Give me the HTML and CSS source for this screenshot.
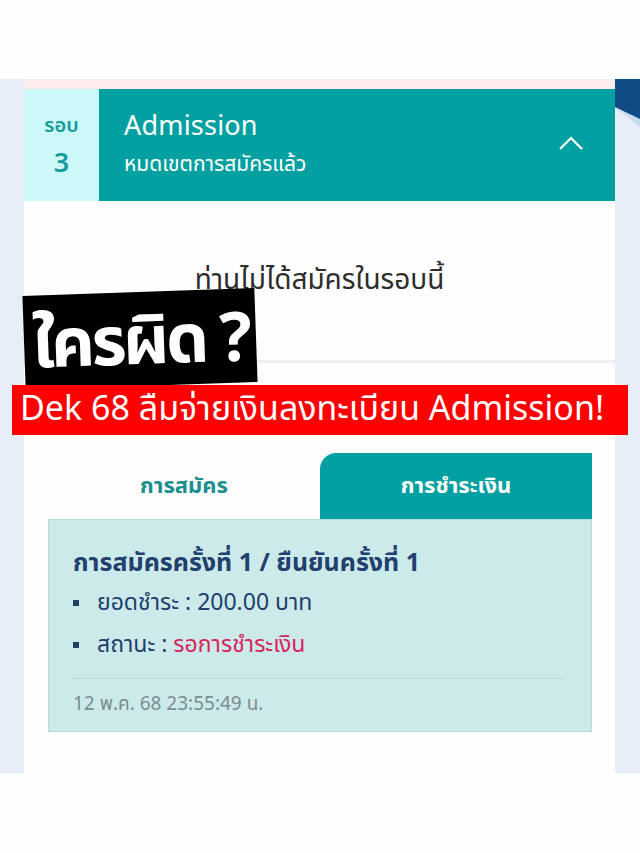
FILE: index.html
```html
<!DOCTYPE html>
<html lang="th">
<head>
<meta charset="utf-8">
<title>Admission</title>
<link rel="stylesheet" href="styles.css">
</head>
<body>
<div class="top-space"></div>
<div class="frame">
  <div class="strip strip-left"></div>
  <div class="card">
    <div class="band"></div>
    <div class="head">
      <div class="round"><span class="round-label">รอบ</span><span class="round-num">3</span></div>
      <div class="title">
        <div class="title-text">
          <div class="t1">Admission</div>
          <div class="t2">หมดเขตการสมัครแล้ว</div>
        </div>
        <svg class="chev" width="26" height="16" viewBox="0 0 26 16"><path d="M2 14 L13 3 L24 14" fill="none" stroke="#fff" stroke-width="2.2"/></svg>
      </div>
    </div>
    <div class="notice">ท่านไม่ได้สมัครในรอบนี้</div>
    <div class="sep"></div>
    <div class="pay">
      <div class="tabs">
        <div class="tab">การสมัคร</div>
        <div class="tab tab-active">การชำระเงิน</div>
      </div>
      <div class="box">
        <div class="box-title">การสมัครครั้งที่ 1 / ยืนยันครั้งที่ 1</div>
        <ul class="items">
          <li>ยอดชำระ : 200.00 บาท</li>
          <li>สถานะ : <span class="pending">รอการชำระเงิน</span></li>
        </ul>
        <div class="date">12 พ.ค. 68 23:55:49 น.</div>
      </div>
    </div>
  </div>
  <div class="strip strip-right">
    <svg class="curve" width="25" height="60" viewBox="0 0 25 60"><path d="M0 0 H25 V48 C18 42 8 34 0 29 Z" fill="#c9dbee"/><path d="M0 0 H25 V40 C17 36 8 32 0 28 Z" fill="#0f4c86"/></svg>
  </div>
</div>
<div class="tag">ใครผิด ?</div>
<div class="banner">Dek 68 ลืมจ่ายเงินลงทะเบียน Admission!</div>
</body>
</html>
```
FILE: styles.css
```css
* { box-sizing: border-box; }
body {
  margin: 0;
  background: #fdfdfd;
  font-family: "Noto Sans Thai", "Noto Sans", "DejaVu Sans", sans-serif;
  position: relative;
  width: 640px;
  height: 853px;
  overflow: hidden;
}
.top-space { height: 79px; background: #fefefe; }
.frame {
  display: flex;
  height: 694px;
  background: #e7eef8;
}
.strip-left { width: 24px; }
.strip-right { width: 25px; }
.curve { display: block; }
.card {
  width: 591px;
  background: #fefefe;
  display: flex;
  flex-direction: column;
}
.band { height: 10px; background: #fcecec; }
.head { height: 112px; display: flex; }
.round {
  width: 75px;
  background: #cdf8fa;
  color: #179c9c;
  display: flex;
  flex-direction: column;
  align-items: center;
  justify-content: center;
  font-weight: 600;
  line-height: 38px;
}
.round-label { font-size: 20px; }
.round-num { font-size: 27px; }
.title {
  flex: 1;
  background: #03a0a1;
  color: #fff;
  display: flex;
  align-items: center;
  justify-content: space-between;
  padding: 0 31px 0 25px;
}
.t1 { font-size: 27px; line-height: 34px; letter-spacing: 0.2px; }
.t2 { font-size: 21px; line-height: 30px; margin-top: 6px; }
.chev { margin-top: -4px; }
.notice {
  height: 159px;
  display: flex;
  align-items: center;
  justify-content: center;
  font-size: 28px;
  color: #2d2d2d;
}
.sep { height: 3px; background: #eceff3; }
.pay { padding: 90px 23px 0 24px; }
.tabs { display: flex; height: 66px; }
.tab {
  flex: 1;
  display: flex;
  align-items: center;
  justify-content: center;
  font-size: 22px;
  font-weight: 700;
  color: #1a8e8e;
}
.tab-active {
  background: #03a0a1;
  color: #fff;
  border-top-left-radius: 16px;
}
.box {
  height: 213px;
  background: #cdeaea;
  border: 1px solid #b6dada;
  padding: 27px 26px 0 24px;
  color: #21406e;
}
.box-title { font-size: 25px; font-weight: 700; line-height: 32px; margin-bottom: 3px; }
.items { list-style: none; margin: 0; padding: 0 0 12px; border-bottom: 1px dotted #a9c6c6; }
.items li {
  font-size: 23px;
  line-height: 42px;
  display: flex;
  align-items: center;
}
.items li::before {
  content: "";
  width: 6px;
  height: 6px;
  background: #21406e;
  margin-right: 18px;
}
.pending { color: #d8245c; margin-left: 6px; }
.date { font-size: 19px; line-height: 30px; margin-top: 11px; color: #7c8c92; }
.tag {
  position: absolute;
  left: 24px;
  top: 292px;
  width: 232px;
  height: 94px;
  background: #000;
  color: #fff;
  transform: rotate(-2deg);
  padding: 12px 0 0 8px;
  white-space: nowrap;
  font-size: 68px;
  font-weight: 700;
  line-height: 80px;
  letter-spacing: -3.5px;
}
.banner {
  position: absolute;
  left: 12px;
  top: 385px;
  width: 616px;
  height: 50px;
  background: #ff0000;
  color: #fff;
  padding-left: 8px;
  white-space: nowrap;
  font-size: 34px;
  line-height: 50px;
}
```
